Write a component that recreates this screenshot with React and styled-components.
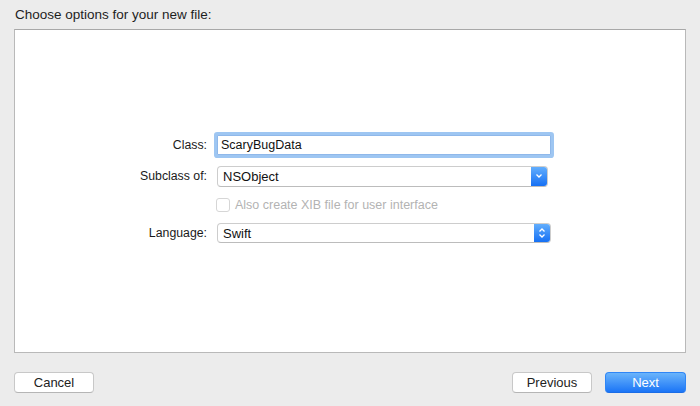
import React from "react";
import styled, { createGlobalStyle } from "styled-components";

const GlobalStyle = createGlobalStyle`
  html, body {
    margin: 0;
    padding: 0;
    background: #ececec;
  }
  body {
    font-family: "Liberation Sans", Arial, sans-serif;
    color: #222;
  }
`;

const Sheet = styled.div`
  width: 700px;
  height: 406px;
  box-sizing: border-box;
  padding: 0 14px;
  display: flex;
  flex-direction: column;
  background: #ececec;
`;

const Title = styled.div`
  height: 29px;
  font-size: 13.5px;
  line-height: 14px;
  padding-top: 8px;
  box-sizing: border-box;
  padding-left: 1px;
  color: #1e1e1e;
`;

const Panel = styled.div`
  height: 324px;
  box-sizing: border-box;
  background: #fff;
  border: 1px solid #b9b9b9;
  border-top-color: #a8a8a8;
  display: flex;
  align-items: center;
  padding-bottom: 6px;
`;

const Form = styled.div`
  display: grid;
  grid-template-columns: 192px 334px;
  grid-template-rows: 32px 30px 28px 28px;
  column-gap: 10px;
  align-items: center;
`;

const Label = styled.div`
  font-size: 12.3px;
  text-align: right;
  color: #1a1a1a;
`;

const TextInput = styled.div`
  height: 20px;
  box-sizing: border-box;
  border: 1px solid #8fb8ea;
  box-shadow: 0 0 0 3px #9ec6f2;
  border-radius: 1px;
  background: #fff;
  font-size: 12.5px;
  line-height: 18px;
  padding-left: 3px;
  color: #111;
`;

const Popup = styled.div`
  height: ${(p) => p.$h}px;
  width: ${(p) => p.$w}px;
  box-sizing: border-box;
  border: 1px solid #cdcdcd;
  border-bottom-color: #bcbcbc;
  border-radius: 4px;
  background: #fff;
  display: flex;
  align-items: stretch;
  overflow: hidden;
  font-size: 13px;
  color: #111;
`;

const PopupText = styled.div`
  flex: 1;
  display: flex;
  align-items: center;
  padding-left: 5px;
`;

const Arrow = styled.div`
  width: 16px;
  background: linear-gradient(#62aefd, #1670f4);
  display: flex;
  align-items: center;
  justify-content: center;
`;

const CheckRow = styled.div`
  display: flex;
  align-items: center;
  gap: 5px;
  font-size: 12.5px;
  color: #b3b3b3;
  margin-left: -1px;
`;

const Box = styled.span`
  width: 12px;
  height: 12px;
  border: 1px solid #d6d6d6;
  border-radius: 3px;
  background: #fff;
`;

const Footer = styled.div`
  flex: 1;
  display: flex;
  align-items: center;
  padding-top: 6px;
  gap: 13px;
`;

const Button = styled.button`
  width: ${(p) => p.$w || 80}px;
  height: 21px;
  box-sizing: border-box;
  border-radius: 4px;
  font-family: inherit;
  font-size: 13px;
  padding: 0;
  border: 1px solid ${(p) => (p.$primary ? "#2f86f6" : "#c8c8c8")};
  border-bottom-color: ${(p) => (p.$primary ? "#1a6de6" : "#b5b5b5")};
  background: ${(p) =>
    p.$primary ? "linear-gradient(#6ab4fb, #1b75f6)" : "#fff"};
  color: ${(p) => (p.$primary ? "#fff" : "#222")};
  ${(p) => p.$push && "margin-left: auto;"}
`;

const Chevron = ({ double }) => (
  <svg width="8" height={double ? 12 : 6} viewBox={double ? "0 0 8 12" : "0 0 8 6"}>
    {double ? (
      <>
        <path d="M1.5 4.5 L4 2 L6.5 4.5" fill="none" stroke="#fff" strokeWidth="1.3" />
        <path d="M1.5 7.5 L4 10 L6.5 7.5" fill="none" stroke="#fff" strokeWidth="1.3" />
      </>
    ) : (
      <path d="M1.5 1.5 L4 4 L6.5 1.5" fill="none" stroke="#fff" strokeWidth="1.3" />
    )}
  </svg>
);

export default function App() {
  return (
    <>
      <GlobalStyle />
      <Sheet>
        <Title>Choose options for your new file:</Title>
        <Panel>
          <Form>
            <Label>Class:</Label>
            <TextInput>ScaryBugData</TextInput>

            <Label>Subclass of:</Label>
            <Popup $h={21} $w={331}>
              <PopupText>NSObject</PopupText>
              <Arrow>
                <Chevron />
              </Arrow>
            </Popup>

            <span />
            <CheckRow>
              <Box />
              Also create XIB file for user interface
            </CheckRow>

            <Label>Language:</Label>
            <Popup $h={20} $w={334}>
              <PopupText>Swift</PopupText>
              <Arrow>
                <Chevron double />
              </Arrow>
            </Popup>
          </Form>
        </Panel>
        <Footer>
          <Button>Cancel</Button>
          <Button $push>Previous</Button>
          <Button $primary $w={81}>Next</Button>
        </Footer>
      </Sheet>
    </>
  );
}
